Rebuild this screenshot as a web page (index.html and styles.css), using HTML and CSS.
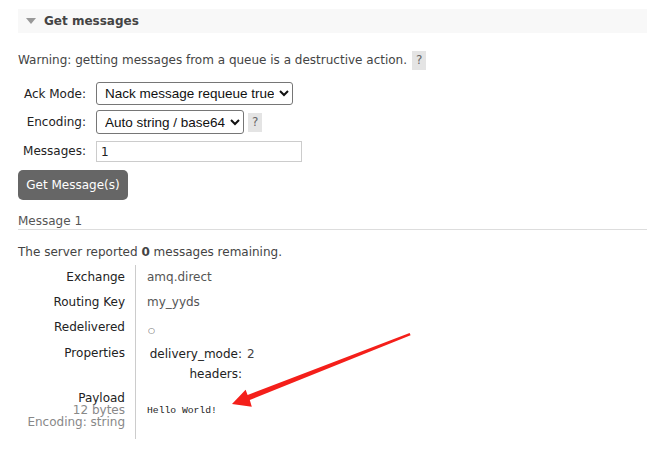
FILE: index.html
```html
<!DOCTYPE html>
<html>
<head>
<meta charset="utf-8">
<link rel="stylesheet" href="styles.css">
</head>
<body>
<div class="section">
  <div class="header"><span class="tri"></span><h2>Get messages</h2></div>
  <p class="warn">Warning: getting messages from a queue is a destructive action. <span class="help">?</span></p>
  <div class="form">
    <label class="lbl lbl-ack">Ack Mode:</label>
    <div class="ctl"><select class="sel sel-ack"><option>Nack message requeue true</option></select></div>
    <label class="lbl lbl-enc">Encoding:</label>
    <div class="ctl"><select class="sel sel-enc"><option>Auto string / base64</option></select><span class="help">?</span></div>
    <label class="lbl lbl-msg">Messages:</label>
    <div class="ctl"><input class="inp" type="text" value="1"></div>
  </div>
  <button class="btn">Get Message(s)</button>
  <h3 class="msg-title">Message 1</h3>
  <p class="remain">The server reported <b>0</b> messages remaining.</p>
  <div class="msg-table">
    <div class="k">Exchange</div><div class="v">amq.direct</div>
    <div class="k">Routing Key</div><div class="v">my_yyds</div>
    <div class="k">Redelivered</div><div class="v"><span class="circ">○</span></div>
    <div class="k">Properties</div>
    <div class="v props">
      <div class="pk">delivery_mode:</div><div class="pv">2</div>
      <div class="pk">headers:</div><div class="pv"></div>
    </div>
    <div class="k payload"><span class="pl">Payload</span><span class="sub">12 bytes</span><span class="sub">Encoding: string</span></div>
    <div class="v payload-v"><pre class="pre">Hello World!</pre></div>
  </div>
</div>
<svg class="arrow" width="647" height="451" viewBox="0 0 647 451">
  <polygon fill="#f41f1a" points="409.6,333.1 410.6,335.2 249.8,400 251.8,406.8 232,404 245.6,389.8 247.6,395"/>
</svg>
</body>
</html>
```
FILE: styles.css
```css
body {
  margin: 0;
  font-family: "DejaVu Sans", "Liberation Sans", sans-serif;
  font-size: 12px;
  color: #444;
  background: #fff;
  position: relative;
}
.section {
  padding-left: 18px;
  padding-top: 9px;
}
.header {
  display: flex;
  align-items: center;
  height: 24px;
  background: #f8f8f8;
  padding-left: 8px;
}
.tri {
  width: 0;
  height: 0;
  border-left: 5px solid transparent;
  border-right: 5px solid transparent;
  border-top: 6px solid #999;
  margin-right: 8px;
}
.header h2 {
  margin: 0;
  font-size: 12px;
  font-weight: bold;
  color: #444;
}
.warn {
  margin: 18px 0 0 0;
  line-height: 19px;
  display: flex;
  align-items: center;
}
.help {
  display: inline-block;
  background: #e4e4e4;
  color: #666;
  padding: 0 4px;
  line-height: 19px;
  margin-left: 5px;
}
.form {
  display: grid;
  grid-template-columns: 72px auto;
  column-gap: 6px;
  row-gap: 5px;
  margin-top: 12px;
  justify-content: start;
  align-items: center;
  color: #222;
}
.lbl {
  text-align: right;
  padding-right: 4px;
}
.ctl {
  display: flex;
  align-items: center;
}
.sel {
  font-family: "Liberation Sans", Arial, sans-serif;
  font-size: 13.5px;
  color: #111;
  background: #fff;
  border: 1px solid #767676;
  border-radius: 3px;
  height: 23px;
  padding: 0 2px 0 4px;
}
.sel-ack { width: 197px; }
.sel-enc { width: 148px; height: 24px; }
.ctl .help { margin-left: 4px; }
.inp {
  width: 206px;
  height: 21px;
  box-sizing: border-box;
  border: 1px solid #ccc;
  padding: 0 4px;
  font-family: inherit;
  font-size: 12px;
  color: #222;
  margin-top: 2px;
}
.btn {
  display: block;
  margin-top: 8px;
  width: 110px;
  height: 30px;
  border: 0;
  border-radius: 5px;
  background: #666;
  color: #fff;
  font-family: inherit;
  font-size: 12px;
  padding: 0;
}
.msg-title {
  margin: 13px 0 0 0;
  font-weight: normal;
  font-size: 12px;
  color: #555;
  line-height: 16px;
  padding-bottom: 0;
  border-bottom: 1px solid #ddd;
}
.remain {
  margin: 14px 0 0 0;
  line-height: 16px;
}
.msg-table {
  display: grid;
  grid-template-columns: 118px 1fr;
  margin-top: 5px;
}
.k {
  text-align: right;
  padding: 5px 10px 5px 0;
  line-height: 15px;
  border-right: 1px solid #ccc;
  color: #222;
}
.v {
  padding: 5px 0 5px 11px;
  line-height: 15px;
  color: #555;
}
.circ {
  display: inline-block;
  font-size: 8px;
  line-height: 15px;
  color: #555;
  font-weight: bold;
  position: relative;
  top: 2px;
  left: 1px;
}
.props {
  display: grid;
  grid-template-columns: 93px auto;
  justify-content: start;
  column-gap: 5px;
  padding-left: 13px;
  padding-top: 3px;
  padding-bottom: 5px;
}
.pk {
  text-align: right;
  line-height: 20px;
  color: #222;
}
.pv {
  line-height: 20px;
  color: #444;
}
.payload {
  display: flex;
  flex-direction: column;
  align-items: flex-end;
  line-height: 12px;
  padding-top: 3px;
  padding-bottom: 11px;
}
.sub { color: #888; }
.payload-v {
  display: flex;
  align-items: center;
  padding-top: 3px;
  padding-bottom: 11px;
}
.pre {
  margin: 0;
  font-family: "Liberation Mono", monospace;
  font-size: 9.7px;
  color: #222;
}
.arrow {
  position: absolute;
  left: 0;
  top: 0;
  pointer-events: none;
}
```
